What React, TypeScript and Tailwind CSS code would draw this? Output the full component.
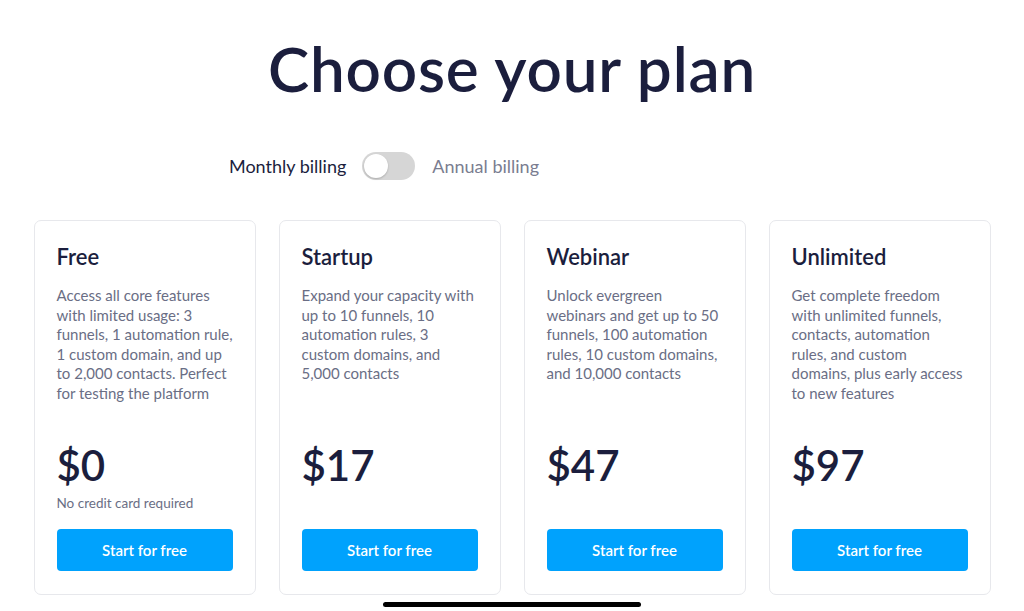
const plans = [
  {
    name: 'Free',
    lines: [
      'Access all core features',
      'with limited usage: 3',
      'funnels, 1 automation rule,',
      '1 custom domain, and up',
      'to 2,000 contacts. Perfect',
      'for testing the platform',
    ],
    price: '$0',
    note: 'No credit card required',
  },
  {
    name: 'Startup',
    lines: ['Expand your capacity with', 'up to 10 funnels, 10', 'automation rules, 3', 'custom domains, and', '5,000 contacts'],
    price: '$17',
  },
  {
    name: 'Webinar',
    lines: [
      'Unlock evergreen',
      'webinars and get up to 50',
      'funnels, 100 automation',
      'rules, 10 custom domains,',
      'and 10,000 contacts',
    ],
    price: '$47',
  },
  {
    name: 'Unlimited',
    lines: [
      'Get complete freedom',
      'with unlimited funnels,',
      'contacts, automation',
      'rules, and custom',
      'domains, plus early access',
      'to new features',
    ],
    price: '$97',
  },
];

function PlanCard({ plan }: { plan: (typeof plans)[number] }) {
  return (
    <div className="flex h-[375px] w-[222px] flex-col rounded-[7px] border border-[#e7e8ec] bg-white px-[22px] pt-[22px] pb-[23px]">
      <h2 className="text-[22px] leading-[28px] font-semibold text-[#1b1e3d]">{plan.name}</h2>
      <p className="mt-[15px] text-[15px] leading-[19.5px] whitespace-nowrap text-[#6a6e85]">
        {plan.lines.map(line => (
          <span key={line} className="block">
            {line}
          </span>
        ))}
      </p>

      <div className="mt-auto">
        <div className="text-[42px] leading-[46px] font-semibold text-[#1b1e3d]">{plan.price}</div>
        <div className="mt-[6px] h-[18px] text-[13.5px] leading-[18px] text-[#6a6e85]">{plan.note}</div>
        <button className="mt-[17px] h-[42px] w-full rounded-[4px] bg-[#00a2fd] text-[15px] font-semibold text-white">
          Start for free
        </button>
      </div>
    </div>
  );
}

export default function App() {
  return (
    <main
      className="flex h-[611px] w-full flex-col items-center overflow-hidden bg-white"
      style={{ fontFamily: 'Lato, "Noto Sans", sans-serif' }}
    >
      <h1 className="mt-[30px] text-[62px] leading-[76px] font-semibold tracking-[0.8px] text-[#1b1e3d]">
        Choose your plan
      </h1>

      <div className="mt-[46px] mr-[256px] flex items-center">
        <span className="text-[18px] text-[#1b1e3d]">Monthly billing</span>
        <div className="ml-[16px] flex h-[28px] w-[53px] items-center rounded-full bg-[#d6d6d6] px-[2px]">
          <div className="h-[24px] w-[24px] rounded-full bg-white shadow-[0_1px_2px_rgba(0,0,0,0.2)]" />
        </div>
        <span className="ml-[17px] text-[18px] text-[#7a7d90]">Annual billing</span>
      </div>

      <div className="mt-[40px] flex gap-[23px]">
        {plans.map(plan => (
          <PlanCard key={plan.name} plan={plan} />
        ))}
      </div>

      <div className="mt-[7px] h-[5px] w-[258px] rounded-full bg-black" />
    </main>
  );
}
